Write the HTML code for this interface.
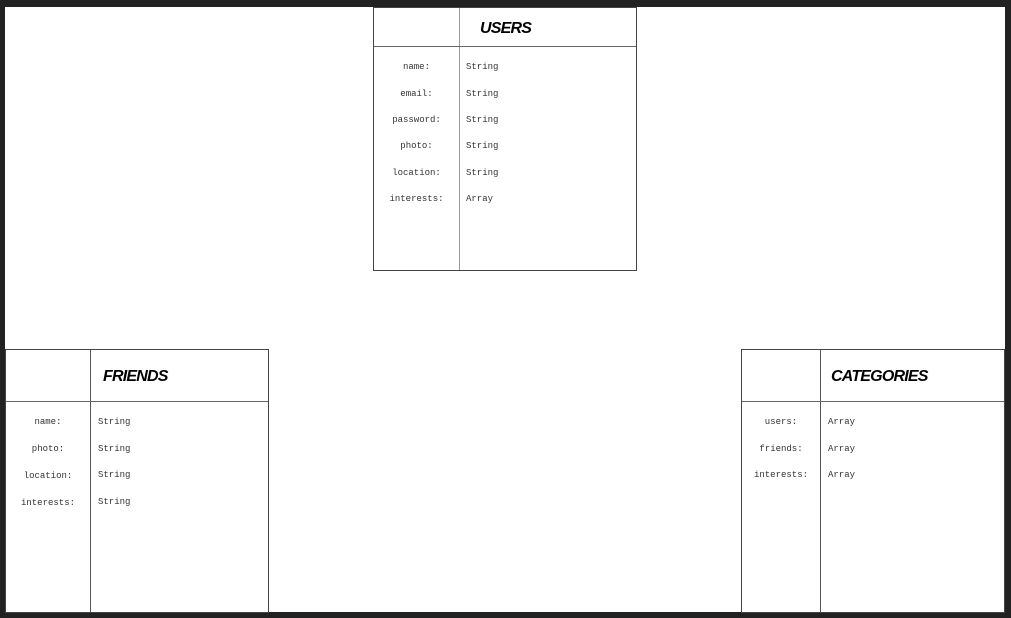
<!DOCTYPE html>
<html><head><meta charset="utf-8"><style>
body{margin:0;width:1011px;height:618px;background:#222;position:relative;overflow:hidden}
.page{position:absolute;left:5px;top:7px;width:1000px;height:605px;background:#fff}
.t{position:absolute;border:1px solid #444;box-sizing:border-box;background:#fff}
.v{position:absolute;top:0;bottom:0;width:0;border-left:1px solid #555}
.h{position:absolute;left:0;right:0;height:0;border-top:1px solid #666}
.ttl{position:absolute;font-family:"Liberation Sans",sans-serif;font-weight:bold;font-style:italic;font-size:16px;letter-spacing:-0.8px;color:#000;line-height:20px}
.l,.r{position:absolute;font-family:"Liberation Mono",monospace;font-size:9px;color:#333;line-height:12px;white-space:nowrap}
.l{text-align:center}
</style></head><body>
<div class="page"></div>

<div class="t" style="left:373px;top:7px;width:264px;height:264px">
 <div class="v" style="left:85px;border-color:#999"></div>
 <div class="h" style="top:38px"></div>
 <div class="ttl" style="left:106px;top:11px">USERS</div>
 <div class="l" style="left:0;width:85px;top:53px">name:</div><div class="r" style="left:92px;top:53px">String</div>
 <div class="l" style="left:0;width:85px;top:80px">email:</div><div class="r" style="left:92px;top:80px">String</div>
 <div class="l" style="left:0;width:85px;top:106px">password:</div><div class="r" style="left:92px;top:106px">String</div>
 <div class="l" style="left:0;width:85px;top:132px">photo:</div><div class="r" style="left:92px;top:132px">String</div>
 <div class="l" style="left:0;width:85px;top:159px">location:</div><div class="r" style="left:92px;top:159px">String</div>
 <div class="l" style="left:0;width:85px;top:185px">interests:</div><div class="r" style="left:92px;top:185px">Array</div>
</div>

<div class="t" style="left:5px;top:349px;width:264px;height:264px">
 <div class="v" style="left:84px"></div>
 <div class="h" style="top:51px"></div>
 <div class="ttl" style="left:97px;top:17px">FRIENDS</div>
 <div class="l" style="left:0;width:84px;top:66px">name:</div><div class="r" style="left:92px;top:66px">String</div>
 <div class="l" style="left:0;width:84px;top:93px">photo:</div><div class="r" style="left:92px;top:93px">String</div>
 <div class="l" style="left:0;width:84px;top:120px">location:</div><div class="r" style="left:92px;top:119px">String</div>
 <div class="l" style="left:0;width:84px;top:147px">interests:</div><div class="r" style="left:92px;top:146px">String</div>
</div>

<div class="t" style="left:741px;top:349px;width:264px;height:264px">
 <div class="v" style="left:78px"></div>
 <div class="h" style="top:51px"></div>
 <div class="ttl" style="left:89px;top:17px">CATEGORIES</div>
 <div class="l" style="left:0;width:78px;top:66px">users:</div><div class="r" style="left:86px;top:66px">Array</div>
 <div class="l" style="left:0;width:78px;top:93px">friends:</div><div class="r" style="left:86px;top:93px">Array</div>
 <div class="l" style="left:0;width:78px;top:119px">interests:</div><div class="r" style="left:86px;top:119px">Array</div>
</div>
</body></html>
